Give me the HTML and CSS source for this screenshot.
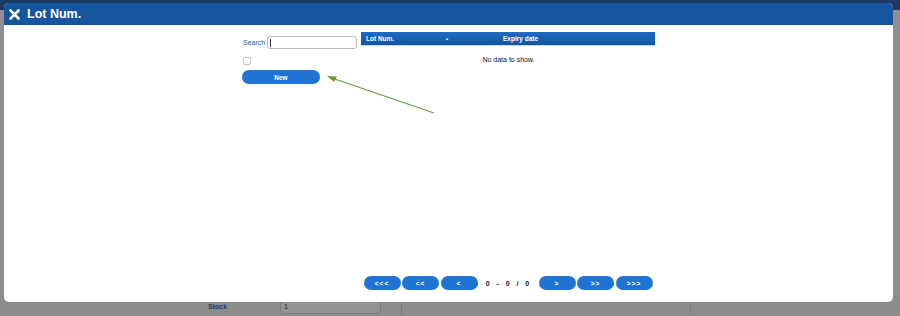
FILE: index.html
```html
<!DOCTYPE html>
<html lang="en">
<head>
    <meta charset="UTF-8">
    <meta name="viewport" content="width=device-width, initial-scale=1.0">
    <title>Lot Num.</title>
    <link rel="stylesheet" href="styles.css">
</head>
<body>
    <div class="page">
        <div class="page-top"></div>
        <div class="page-middle"></div>
        <div class="page-row">
            <div class="row-label">Stock</div>
            <div class="row-input">1</div>
            <div class="row-divider"></div>
            <div class="row-divider second"></div>
        </div>
    </div>

    <div class="modal">
        <div class="modal-header">
            <svg class="close-icon" width="11" height="11" viewBox="0 0 11 11">
                <path d="M1.5 1.5 L9.5 9.5 M9.5 1.5 L1.5 9.5" stroke="#fff" stroke-width="2.6" stroke-linecap="square"/>
            </svg>
            <span class="modal-title">Lot Num.</span>
        </div>
        <div class="modal-body">
            <div class="side">
                <div class="search-row">
                    <label class="search-label">Search</label>
                    <div class="search-input"><span class="caret"></span></div>
                </div>
                <div class="check"></div>
                <button class="btn btn-new">New</button>
            </div>
            <div class="main">
                <div class="table-head">
                    <div class="col col-lot">Lot Num. <span class="sort">&#9650;</span></div>
                    <div class="col col-exp">Expiry date</div>
                </div>
                <div class="empty">No data to show.</div>
                <div class="pager">
                    <button class="btn btn-page">&lt;&lt;&lt;</button>
                    <button class="btn btn-page">&lt;&lt;</button>
                    <button class="btn btn-page">&lt;</button>
                    <div class="counter">0&nbsp;&nbsp;-&nbsp;&nbsp;0&nbsp;&nbsp;/&nbsp;&nbsp;0</div>
                    <button class="btn btn-page">&gt;</button>
                    <button class="btn btn-page">&gt;&gt;</button>
                    <button class="btn btn-page">&gt;&gt;&gt;</button>
                </div>
            </div>
        </div>
        <!-- annotation arrow pointing at the New button -->
        <svg class="pointer" width="120" height="50" viewBox="0 0 120 50">
            <path d="M110 40 L5 4" stroke="#6a9b3c" stroke-width="1.3" fill="none"/>
            <path d="M3 3 L13 3.5 L10 9 Z" fill="#6a9b3c"/>
        </svg>
    </div>
</body>
</html>
```

FILE: styles.css
```css
body {
    margin: 0;
    width: 900px;
    height: 316px;
    overflow: hidden;
    background: #8e8e8e;
    font-family: 'Liberation Sans', Arial, sans-serif;
}

/* page behind the dialog, dimmed */
.page {
    height: 316px;
    display: flex;
    flex-direction: column;
}

.page-top {
    height: 10px;
    background: #1d3a63;
}

.page-middle {
    flex: 1;
    background: #8f8f8f;
}

.page-row {
    height: 20px;
    display: flex;
    align-items: flex-start;
    background: #8d8d8d;
}

.row-label {
    margin-left: 208px;
    width: 72px;
    font-size: 7px;
    font-weight: bold;
    color: #23406b;
    padding-top: 7px;
}

.row-input {
    width: 96px;
    height: 12px;
    margin-top: 4px;
    border: 1px solid #7a7a7a;
    border-radius: 3px;
    background: #939393;
    font-size: 7px;
    color: #222;
    padding-left: 3px;
    line-height: 12px;
}

.row-divider {
    width: 1px;
    height: 20px;
    background: #7c7c7c;
    margin-left: 20px;
}

.row-divider.second {
    margin-left: 288px;
}

/* dialog */
.modal {
    position: absolute;
    left: 4px;
    top: 3px;
    width: 889px;
    height: 299px;
    background: #fff;
    border-radius: 5px;
    overflow: hidden;
    display: flex;
    flex-direction: column;
}

.modal-header {
    height: 22px;
    background: #15559e;
    display: flex;
    align-items: center;
    padding-left: 5px;
    gap: 7px;
}

.close-icon {
    display: block;
}

.modal-title {
    color: #fff;
    font-size: 12.5px;
    font-weight: bold;
}

.modal-body {
    flex: 1;
    display: flex;
    padding: 7px 0 12px 238px;
    gap: 4px;
}

.side {
    width: 115px;
    display: flex;
    flex-direction: column;
    padding-top: 4px;
}

.search-row {
    display: flex;
    align-items: center;
    gap: 2px;
}

.search-label {
    font-size: 7px;
    color: #2c5b8f;
    padding-left: 1px;
}

.search-input {
    width: 86px;
    height: 11px;
    border: 1px solid #b9b9b9;
    border-radius: 3px;
    display: flex;
    align-items: center;
    padding-left: 2px;
}

.caret {
    width: 1px;
    height: 8px;
    background: #333;
}

.check {
    width: 6px;
    height: 6px;
    border: 1px solid #c4c4c4;
    border-radius: 2px;
    margin: 8px 0 0 1px;
}

.btn {
    border: none;
    margin: 0;
    padding: 0;
    color: #fff;
    font-family: 'Liberation Sans', Arial, sans-serif;
    font-weight: bold;
    font-size: 6.5px;
    background: #1f74d3;
    border-radius: 7px;
    height: 14px;
}

.btn-new {
    width: 78px;
    margin-top: 5px;
}

.main {
    width: 294px;
    display: flex;
    flex-direction: column;
}

.table-head {
    height: 14px;
    background: linear-gradient(#1f6cc4, #11559f);
    border-bottom: 1px solid #c5d7ee;
    box-sizing: border-box;
    display: flex;
    align-items: center;
    color: #fff;
    font-size: 6.5px;
    font-weight: bold;
}

.col-lot {
    width: 88px;
    padding-left: 5px;
    box-sizing: border-box;
    display: flex;
    justify-content: space-between;
}

.sort {
    font-size: 4px;
    line-height: 7px;
}

.col-exp {
    padding-left: 54px;
}

.empty {
    text-align: center;
    font-size: 7px;
    color: #111;
    margin-top: 10px;
    padding-left: 1px;
}

.pager {
    margin-top: auto;
    display: flex;
    align-items: center;
    justify-content: center;
    gap: 1.5px;
}

.btn-page {
    width: 37px;
    letter-spacing: 1px;
}

.counter {
    width: 58px;
    text-align: center;
    font-size: 7px;
    font-weight: bold;
    color: #111;
    letter-spacing: 1px;
}

.pointer {
    position: absolute;
    left: 320px;
    top: 70px;
}
```
